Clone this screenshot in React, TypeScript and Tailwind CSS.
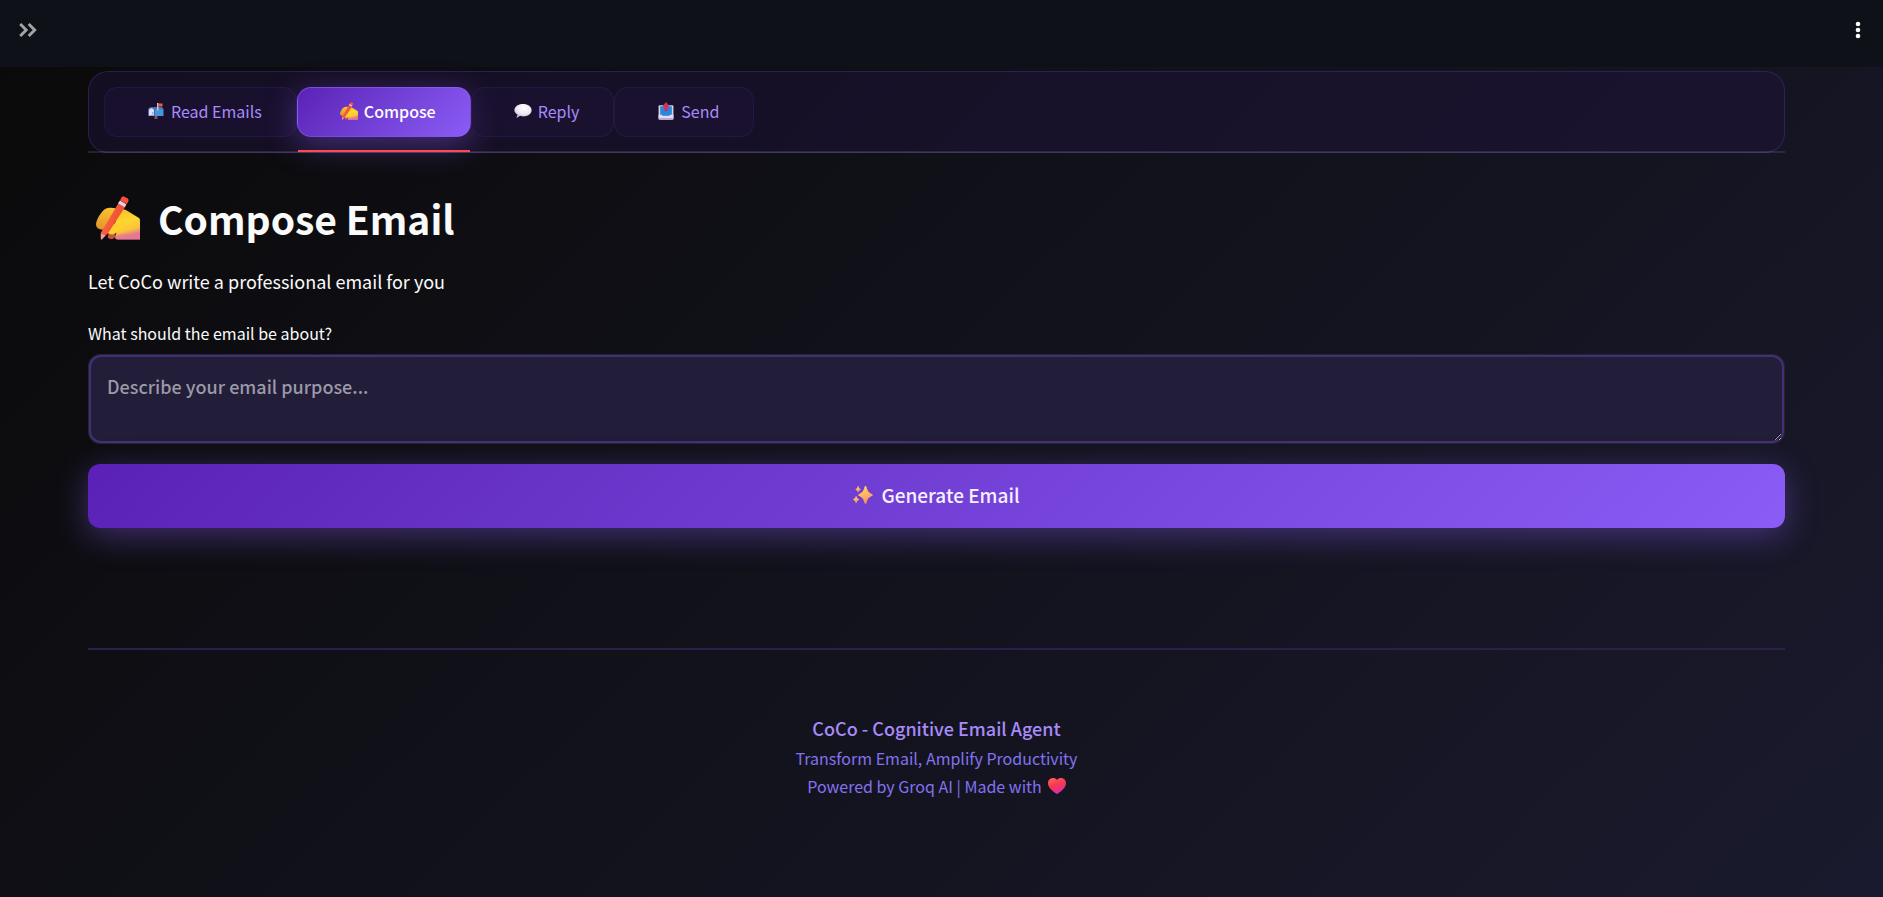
import { useState } from "react";
import type { ReactNode } from "react";

interface IconProps {
    className?: string;
}

function ExpandIcon({ className }: IconProps) {
    return (
        <svg
            viewBox="0 0 18 14"
            className={className}
            fill="none"
            stroke="currentColor"
            strokeWidth="2.9"
            aria-hidden="true"
        >
            <path d="M1.200 1l6 6-6 6M9.700 1l6 6-6 6" />
        </svg>
    );
}

function MailboxIcon({ className }: IconProps) {
    return (
        <svg viewBox="0 0 32 32" className={className} aria-hidden="true">
            <rect x="13" y="23" width="6" height="9" fill="#7d5460" />
            <path d="M9 8h15a7 7 0 0 1 7 7v11H9z" fill="#4a94dc" />
            <path d="M9 8h15a7 7 0 0 1 7 5H12z" fill="#377cc4" />
            <path d="M0 15a7 7 0 0 1 14 0v11H0z" fill="#3d69b6" />
            <path d="M2 15.500a5 5 0 0 1 10 0V25H2z" fill="#e6dff1" />
            <path d="M8 18h3v5H8z" fill="#b6a8cc" />
            <rect x="18" y="0" width="3" height="15" fill="#cabfd8" />
            <path d="M20 1h9v6h-9z" fill="#f4583f" />
        </svg>
    );
}

function WritingHandIcon({ className }: IconProps) {
    return (
        <svg viewBox="0 0 45 44" className={className} aria-hidden="true">
            <defs>
                <linearGradient id="hand" x1="0" y1="0" x2="0.3" y2="1">
                    <stop offset="0" stopColor="#f4b52c" />
                    <stop offset="0.5" stopColor="#ffd62f" />
                    <stop offset="0.8" stopColor="#fbc536" />
                    <stop offset="1" stopColor="#e8719b" />
                </linearGradient>
                <linearGradient id="fist" x1="0.6" y1="0" x2="0.4" y2="1">
                    <stop offset="0" stopColor="#fcc32e" />
                    <stop offset="1" stopColor="#e3952a" />
                </linearGradient>
                <linearGradient id="pencil" x1="0" y1="0" x2="1" y2="0.5">
                    <stop offset="0" stopColor="#ff7545" />
                    <stop offset="1" stopColor="#e9432f" />
                </linearGradient>
            </defs>
            <path
                d="M0 29c0-5 5-13 9-16 4-2 11-2 14 1l-2 9-9 11c-5 0-11 1-12-5z"
                fill="url(#fist)"
            />
            <path d="M13 37l7 2c0 5-5 6-8 3z" fill="#c7543f" />
            <path
                d="M22 14c3-2 6-1 9 0l13 8c1 1 1 2 1 4v18H22c-2 0-3-2-2-4l1-3c-4 3-8 2-9-1-1-4 6-6 8-10z"
                fill="url(#hand)"
            />
            <path
                d="M12 34c2-5 8-8 15-6 2 1 2 3 0 4-4 2-8 7-13 6-2 0-3-2-2-4z"
                fill="#ffcf2d"
            />
            <path
                d="M20 41c6-4 16-4 25-1v4H22c-2 0-3-1-2-3z"
                fill="#e77c8d"
                opacity="0.65"
            />
            <path d="M23.500 6l7 3.500L12 38l-7 5v-6z" fill="url(#pencil)" />
            <path d="M5 38l5 2-4 4H5z" fill="#f09ba9" />
            <path d="M24.500 4l6.500 4-1.500 3-7-4z" fill="#dcd4f4" />
            <path
                d="M26 1c.5-1 1.500-1 2.500-1l4 2c1 1 1 2 .5 3l-1.500 3-7-4z"
                fill="#fb4c3c"
            />
        </svg>
    );
}

function SpeechIcon({ className }: IconProps) {
    return (
        <svg viewBox="0 0 32 26" className={className} aria-hidden="true">
            <defs>
                <radialGradient id="speech" cx="0.55" cy="0.3" r="0.7">
                    <stop offset="0" stopColor="#ffffff" />
                    <stop offset="0.6" stopColor="#eee7f3" />
                    <stop offset="1" stopColor="#c2b5d0" />
                </radialGradient>
            </defs>
            <path
                d="M16 0c9 0 16 5 16 11.500S25 23 16 23c-2 0-4 0-5.500-1L5 25.500c-1 .5-1.500 0-1-1l2-5C2 17.500 0 14.500 0 11.500 0 5 7 0 16 0z"
                fill="url(#speech)"
            />
        </svg>
    );
}

function OutboxIcon({ className }: IconProps) {
    return (
        <svg viewBox="0 0 28 34" className={className} aria-hidden="true">
            <rect x="0" y="6" width="28" height="27" rx="2" fill="#d9d3e2" />
            <path d="M3 8h22v18H3z" fill="#2788dc" />
            <path
                d="M0 24h5c1 0 2 1 2 2 0 2 14 2 14 0 0-1 1-2 2-2h5v7a2 2 0 0 1-2 2H2a2 2 0 0 1-2-2z"
                fill="#e4def0"
            />
            <path
                d="M0 30h28v1a2 2 0 0 1-2 2H2a2 2 0 0 1-2-2z"
                fill="#b9a4d6"
            />
            <path
                d="M14 0l6 7c.5 1 0 2-1 2h-2v7c0 2-6 2-6 0V9H9C8 9 7.500 8 8 7z"
                fill="#e02955"
            />
        </svg>
    );
}

function SparklesIcon({ className }: IconProps) {
    return (
        <svg viewBox="0 0 40 36" className={className} aria-hidden="true">
            <defs>
                <linearGradient id="spark" x1="0.3" y1="0" x2="0.6" y2="1">
                    <stop offset="0" stopColor="#ffd45b" />
                    <stop offset="0.5" stopColor="#ffb665" />
                    <stop offset="1" stopColor="#f58a64" />
                </linearGradient>
            </defs>
            <g fill="url(#spark)">
                <path d="M25 0c1 0 2 1 2 2 2 8 4 11 11 14 2 1 2 3 0 4-7 3-9 6-11 14 0 2-3 2-4 0-2-8-4-11-11-14-2-1-2-3 0-4 7-3 9-6 11-14 0-1 1-2 2-2z" />
                <path d="M10 0c1 0 1 1 1.500 2 .5 2 1.500 3 3.500 4 1 .5 1 1 0 1.500-2 1-3 2-3.500 4-.5 1.500-2 1.500-2.500 0-.5-2-1.500-3-3.500-4-1-.5-1-1 0-1.500 2-1 3-2 3.500-4 0-1 .5-2 1-2z" />
                <path d="M6 20c1 0 1 1 1.500 2 .5 2 1.500 3 4 4 1 .5 1 1.500 0 2-2.500 1-3.500 2-4 5-.5 1.500-2 1.500-2.500 0-.5-3-1.500-4-4-5-1-.5-1-1.500 0-2 2.500-1 3.500-2 4-4 0-1 .5-2 1-2z" />
            </g>
        </svg>
    );
}

function HeartIcon({ className }: IconProps) {
    return (
        <svg viewBox="0 0 36 32" className={className} aria-hidden="true">
            <defs>
                <linearGradient id="heart" x1="0.2" y1="0" x2="0.6" y2="1">
                    <stop offset="0" stopColor="#ff6259" />
                    <stop offset="0.45" stopColor="#f9384f" />
                    <stop offset="1" stopColor="#d92bb0" />
                </linearGradient>
            </defs>
            <path
                d="M18 4C20 1 23 0 26 0c6 0 10 5 10 10 0 9-9 16-16 21-1 1-3 1-4 0C9 26 0 19 0 10 0 5 4 0 10 0c3 0 6 1 8 4z"
                fill="url(#heart)"
            />
        </svg>
    );
}

interface Tab {
    id: string;
    label: string;
    icon: ReactNode;
}

const TABS: Tab[] = [
    {
        id: "read",
        label: "Read Emails",
        icon: <MailboxIcon className="h-4 w-4.5" />,
    },
    {
        id: "compose",
        label: "Compose",
        icon: <WritingHandIcon className="h-4.5 w-4.5" />,
    },
    {
        id: "reply",
        label: "Reply",
        icon: <SpeechIcon className="h-3.5 w-4.5" />,
    },
    {
        id: "send",
        label: "Send",
        icon: <OutboxIcon className="h-4.5 w-4.5" />,
    },
];

export default function App() {
    const [active, setActive] = useState("compose");
    const [purpose, setPurpose] = useState("");

    return (
        <div className="min-h-screen bg-linear-135 from-[#0a0a0a] to-[#1a1a2e] font-['Noto_Sans_CJK_SC','Source_Sans_Pro',sans-serif] text-[#fafafa]">
            {/* Header */}
            <header className="flex h-[67px] items-center justify-between bg-[#0e1117] pr-4 pb-2 pl-[19px]">
                <button aria-label="Open sidebar" className="text-[#a3a4a6]">
                    <ExpandIcon className="h-3.5 w-4.5" />
                </button>
                <button aria-label="Menu" className="px-1.5">
                    <svg
                        viewBox="0 0 6 18"
                        className="h-4.5 w-1.5"
                        fill="currentColor"
                    >
                        <circle cx="3" cy="3" r="2.300" />
                        <circle cx="3" cy="9" r="2.300" />
                        <circle cx="3" cy="15" r="2.300" />
                    </svg>
                </button>
            </header>

            <main className="pt-1 pr-[98px] pl-[88px]">
                {/* Tabs */}
                <div className="relative">
                    <div
                        role="tablist"
                        className="flex rounded-[20px] border border-[#8b5cf6]/20 bg-[#1e123a]/50 p-[15px]"
                    >
                        {TABS.map((tab) => (
                            <button
                                key={tab.id}
                                role="tab"
                                aria-selected={active === tab.id}
                                onClick={() => setActive(tab.id)}
                                className={`relative flex h-[50px] items-center gap-1.5 rounded-[14px] border pr-8.5 pb-0.5 pl-10.5 text-base ${
                                    active === tab.id
                                        ? "border-[#8b5cf6]/60 bg-linear-135 from-[#5b21b6] to-[#8b5cf6] font-medium text-white shadow-[0_8px_32px_rgba(139,92,246,0.4)]"
                                        : "border-[#8b5cf6]/10 bg-[#1e1238]/50 text-[#a78bfa]"
                                }`}
                            >
                                {tab.icon}
                                {tab.label}
                                {active === tab.id && (
                                    <span className="absolute inset-x-0 -bottom-4 z-10 h-0.5 bg-[#ff4b4b]" />
                                )}
                            </button>
                        ))}
                    </div>
                    <div className="pointer-events-none absolute inset-x-0 bottom-0 h-0.5 bg-white/10" />
                </div>

                {/* Compose form */}
                <h1 className="mt-[29px] flex items-center gap-[18px] pl-2 text-[39px] leading-[72px] font-bold">
                    <WritingHandIcon className="h-11 w-11" />
                    Compose Email
                </h1>
                <p className="mt-[13px] text-lg leading-7">
                    Let CoCo write a professional email for you
                </p>
                <form onSubmit={(e) => e.preventDefault()}>
                    <label
                        htmlFor="purpose"
                        className="mt-6.5 block text-base leading-6"
                    >
                        What should the email be about?
                    </label>
                    <div className="mt-[9px] rounded-xl border border-[#26262e] bg-[#26262e]">
                        <textarea
                            id="purpose"
                            value={purpose}
                            onChange={(e) => setPurpose(e.target.value)}
                            placeholder="Describe your email purpose..."
                            className="block h-22 w-full rounded-xl border-2 border-[#442f77] bg-[#221d38] px-4 py-[15px] text-lg leading-7 font-medium placeholder:text-[#9c99a8] focus:outline-none"
                        />
                    </div>
                    <button
                        type="submit"
                        className="mt-5 flex h-16 w-full items-center justify-center gap-2 rounded-xl bg-linear-135 from-[#5b21b6] to-[#8b5cf6] pb-0.5 text-[19px] font-medium text-[#f5f0ff] shadow-[0_8px_32px_rgba(139,92,246,0.4)]"
                    >
                        <SparklesIcon className="h-4.5 w-5" />
                        Generate Email
                    </button>
                </form>

                {/* Footer */}
                <hr className="mt-30 border-t-2 border-[#2c1f4c]" />
                <footer className="pt-15.5 pb-16 text-center text-base leading-7 text-[#8272f0]">
                    <p className="text-lg leading-8 font-medium text-[#a78bfa]">
                        CoCo - Cognitive Email Agent
                    </p>
                    <p>Transform Email, Amplify Productivity</p>
                    <p className="flex items-center justify-center gap-1.5">
                        Powered by Groq AI | Made with
                        <HeartIcon className="h-4 w-4.5" />
                    </p>
                </footer>
            </main>
        </div>
    );
}
